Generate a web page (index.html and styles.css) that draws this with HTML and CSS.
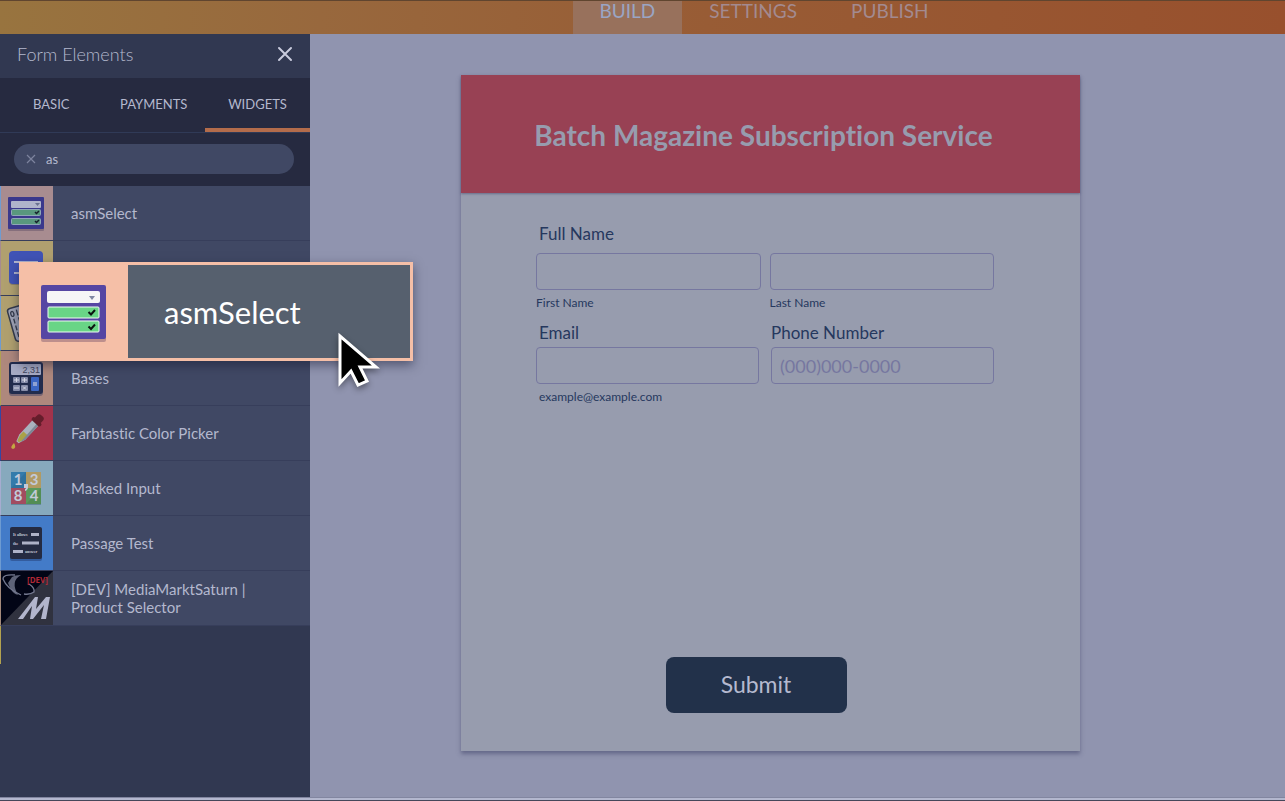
FILE: index.html
```html
<!DOCTYPE html>
<html lang="en">
<head>
  <meta charset="UTF-8" />
  <title>Form Builder</title>
  <link rel="stylesheet" href="styles.css">
</head>
<body>
  <nav class="topbar">
    <a href="#build" class="active">BUILD</a>
    <a href="#settings">SETTINGS</a>
    <a href="#publish">PUBLISH</a>
  </nav>

  <div class="workspace">
    <aside class="sidebar">
      <div class="sidebar-header">
        <h2>Form Elements</h2>
        <button class="close" aria-label="Close">
          <svg width="16" height="16" viewBox="0 0 16 16"><path d="M2 2l12 12M14 2L2 14" stroke="#c9cbdd" stroke-width="2" stroke-linecap="round"/></svg>
        </button>
      </div>

      <div class="tabs">
        <button>BASIC</button>
        <button>PAYMENTS</button>
        <button class="active">WIDGETS</button>
      </div>

      <div class="search">
        <label class="search-box">
          <svg width="10" height="10" viewBox="0 0 10 10"><path d="M1 1l8 8M9 1L1 9" stroke="#7d839e" stroke-width="1.2"/></svg>
          <input type="text" value="as" aria-label="Search widgets">
        </label>
      </div>

      <ul class="widgets">
        <li class="edge-sky">
          <span class="icon pink">
            <svg width="52" height="54" viewBox="0 0 52 54">
              <rect x="7" y="13" width="36" height="32" rx="1" fill="#866f7c"/>
              <rect x="7" y="11" width="36" height="32" rx="1" fill="#3a388c"/>
              <rect x="10" y="15" width="30" height="7" rx="1" fill="#b0b4cb"/>
              <path d="M34 17h5l-2.500 3z" fill="#697090"/>
              <rect x="10.500" y="23.500" width="29" height="6" rx="1" fill="#59987e" stroke="#8fa6b7"/>
              <rect x="10.500" y="32.500" width="29" height="6" rx="1" fill="#59987e" stroke="#8fa6b7"/>
              <path d="M34 26l1.500 1.500L38 25M34 35l1.500 1.500L38 34" fill="none" stroke="#15202c" stroke-width="1.500"/>
            </svg>
          </span>
          <span>asmSelect</span>
        </li>
        <li class="edge-pink">
          <span class="icon gold">
            <svg width="52" height="54" viewBox="0 0 52 54">
              <rect x="8" y="11" width="34" height="33" rx="4" fill="#8a8068"/>
              <rect x="8" y="10" width="34" height="33" rx="4" fill="#4053b5"/>
              <path d="M13 21h24M13 32h24" stroke="#b0b4cf" stroke-width="2"/>
            </svg>
          </span>
        </li>
        <li class="edge-sky">
          <span class="icon gold">
            <svg width="52" height="54" viewBox="0 0 52 54">
              <g transform="rotate(-16 20 30)">
                <rect x="11" y="10" width="22" height="34" rx="3" fill="#9fa3b5" stroke="#343a4b" stroke-width="1.500"/>
                <g fill="none" stroke="#343a4b" stroke-width="1.300"><ellipse cx="15" cy="16" rx="1.500" ry="2.500"/><path d="M20 13v6M15 21v5M20 21v5M15 28v5M20 28v5M15 35v5M20 35v5"/></g>
              </g>
            </svg>
          </span>
        </li>
        <li class="edge-gold">
          <span class="icon clay">
            <svg width="52" height="54" viewBox="0 0 52 54">
              <rect x="8" y="12" width="34" height="33" rx="3" fill="#776572"/>
              <rect x="8" y="11" width="34" height="32" rx="3" fill="#222c4d"/>
              <rect x="10" y="13" width="30" height="11" rx="1" fill="#a7abc4"/>
              <text x="39" y="22" class="calc-digits">2,31</text>
              <g fill="#858ba8"><rect x="12" y="26" width="7" height="6" rx="1"/><rect x="20" y="26" width="7" height="6" rx="1"/><rect x="12" y="34" width="7" height="6" rx="1"/><rect x="20" y="34" width="7" height="6" rx="1"/></g>
              <path d="M13 29h5M15.500 27v4M21 29h5M23.500 27v4M13 37h5M22 35.500l3 3M25 35.500l-3 3" stroke="#d3d5e2"/>
              <rect x="30" y="26" width="8" height="14" rx="1" fill="#3b66c3"/>
              <rect x="32" y="31" width="4" height="4" fill="#8fa2d2"/>
            </svg>
          </span>
          <span>Bases</span>
        </li>
        <li class="edge-blue">
          <span class="icon red">
            <svg width="52" height="54" viewBox="0 0 52 54">
              <g transform="rotate(43 26 26)">
                <path d="M22 13h8v20l-2.500 7h-3L22 33z" fill="#a9b1bd"/>
                <path d="M23 28h6v5l-2 6h-2l-2-6z" fill="#aaa247"/>
                <path d="M27.500 13h2.500v20l-2 5z" fill="#7d8795"/>
                <rect x="20" y="10" width="12" height="4" rx="2" fill="#651d2b"/>
                <rect x="22" y="4" width="8" height="8" rx="3" fill="#651d2b"/>
              </g>
              <path d="M13 37q-5 5-1 6 4-1 1-6z" fill="#c3a642"/>
            </svg>
          </span>
          <span>Farbtastic Color Picker</span>
        </li>
        <li class="edge-pale">
          <span class="icon teal">
            <svg width="52" height="54" viewBox="0 0 52 54">
              <rect x="10" y="12" width="30" height="32" fill="#65879c"/>
              <path d="M10 11h15v16H10z" fill="#347bab"/><path d="M25 11h15v16H25z" fill="#b09a64"/>
              <path d="M10 27h15v16H10z" fill="#a24c60"/><path d="M25 27h15v16H25z" fill="#5a995d"/>
              <path d="M10 27l15-16v16zM25 43l15-16v16z" fill="#000" opacity="0.080"/>
              <text x="17" y="24" class="tile-digit">1</text>
              <text x="33" y="24" class="tile-digit">3</text>
              <text x="17" y="40" class="tile-digit">8</text>
              <text x="33" y="40" class="tile-digit">4</text>
              <path d="M23 23h4v3q0 3-3 4v-2q1 0 1-1h-2z" fill="#c3cad9"/>
            </svg>
          </span>
          <span>Masked Input</span>
        </li>
        <li class="edge-sky">
          <span class="icon blue">
            <svg width="52" height="54" viewBox="0 0 52 54">
              <rect x="9" y="12" width="32" height="33" rx="2" fill="#335c9e"/>
              <rect x="9" y="11" width="32" height="32" rx="2" fill="#252b42"/>
              <text x="12" y="20" class="passage">It allows</text>
              <text x="12" y="29" class="passage">the</text>
              <text x="24" y="37" class="passage">answer</text>
              <path d="M30 18.500h8M21 27h17M12 35.500h10" stroke="#aeb2c8" stroke-width="3"/>
            </svg>
          </span>
          <span>Passage Test</span>
        </li>
        <li class="edge-sand">
          <span class="icon black">
            <svg width="52" height="54" viewBox="0 0 52 54">
              <path d="M52 0v54H0z" fill="#30323f"/>
              <path d="M20 4q-11 6-3 20Q11 23 7 12l4-6q3-2 9-2z" fill="#5e6378"/>
              <path d="M14 4Q2 3 2 8q4 10 18 16M28 13q6 4 5 8-4 3-10 2" fill="none" stroke="#747990" stroke-width="1.300"/>
              <text x="26" y="12" class="dev">[DEV]</text>
              <path d="M17 48l17-22h3l-2 12 10-12h4l-4 22h-5l3-14-11 14h-3l2-13-9 13z" fill="#b2b5cc"/>
            </svg>
          </span>
          <span>[DEV] MediaMarktSaturn | Product Selector</span>
        </li>
      </ul>

      <!-- widget being dragged onto the form -->
      <div class="dragged">
        <div class="dragged-icon">
          <svg width="66" height="58" viewBox="0 0 66 58">
            <rect x="0" y="3" width="65" height="54" rx="2" fill="#bd8f8c"/>
            <rect x="0" y="0" width="65" height="54" rx="2" fill="#5546a3"/>
            <rect x="6" y="6" width="53" height="12" rx="2" fill="#f5f5f7"/>
            <path d="M48 11h6l-3 4z" fill="#7e87a3"/>
            <rect x="7" y="22" width="51" height="11" rx="1" fill="#69d586" stroke="#eefaf2"/>
            <rect x="7" y="36" width="51" height="11" rx="1" fill="#69d586" stroke="#eefaf2"/>
            <path d="M47.500 27l2.500 2.500 4-4.500M47.500 41.500L50 44l4-4.500" fill="none" stroke="#0b1410" stroke-width="2"/>
          </svg>
        </div>
        <div class="dragged-label">asmSelect</div>
        <svg class="cursor" width="44" height="58" viewBox="0 0 44 58">
          <path d="M2 4v47l11-12 7 14 9-4-7-14h16z" fill="#000" stroke="#fff" stroke-width="3"/>
        </svg>
      </div>
    </aside>

    <main class="canvas">
      <form class="form-card">
        <h1>Batch Magazine Subscription Service</h1>
        <div class="form-body">
          <div class="group">
            <p class="label" id="full-name">Full Name</p>
            <div class="row name-row" role="group" aria-labelledby="full-name">
              <div class="field">
                <input type="text" id="first">
                <label class="hint" for="first">First Name</label>
              </div>
              <div class="field">
                <input type="text" id="last">
                <label class="hint" for="last">Last Name</label>
              </div>
            </div>
          </div>
          <div class="row contact-row">
            <div class="field email-field">
              <label class="label" for="email">Email</label>
              <input type="email" id="email" aria-describedby="email-hint">
              <span class="hint" id="email-hint">example@example.com</span>
            </div>
            <div class="field">
              <label class="label" for="phone">Phone Number</label>
              <input type="tel" id="phone" placeholder="(000)000-0000">
            </div>
          </div>
          <div class="actions">
            <button type="submit">Submit</button>
          </div>
        </div>
      </form>
    </main>
  </div>
</body>
</html>
```

FILE: styles.css
```css
* {
  box-sizing: border-box;
}

body {
  margin: 0;
  min-height: 100vh;
  display: flex;
  flex-direction: column;
  background: #b3b7ce;
  border-bottom: 1px solid #45475a;
  font-family: Lato, "Open Sans", sans-serif;
  font-variant-ligatures: none;
  color: #b4b8ce;
}

button,
input {
  font-family: inherit;
}

button {
  border: none;
  cursor: pointer;
}

/* Top navigation */
.topbar {
  display: flex;
  padding-left: calc(50% - 70px);
  border-top: 1px solid #60452f;
  background: linear-gradient(to right, #98743f, #98683d 25%, #985c35 55%, #98502d);
}

.topbar a {
  padding: 0 27px 13px;
  font-size: 19px;
  line-height: 20px;
  color: #a38a90;
  text-decoration: none;
}

.topbar a.active {
  background: #98715c;
  color: #9aa5c4;
}

.workspace {
  flex: 1;
  display: flex;
  margin-bottom: 2px;
  border-bottom: 1px solid #8286a0;
}

/* Sidebar */
.sidebar {
  position: relative;
  width: 310px;
  flex-shrink: 0;
  background: #313851;
}

.sidebar-header {
  display: flex;
  align-items: center;
  justify-content: space-between;
  height: 44px;
  padding: 0 17px 4px;
}

.sidebar-header h2 {
  margin: 0;
  font-size: 18px;
  font-weight: 300;
  line-height: 24px;
}

.close {
  padding: 0;
  background: none;
  line-height: 0;
}

.tabs {
  display: grid;
  grid-template-columns: 1fr 1fr 105px;
  background: #262a40;
  border-bottom: 1px solid #303a57;
}

.tabs button {
  height: 54px;
  padding: 2px 0 0;
  background: none;
  border-bottom: 4px solid transparent;
  font-size: 13px;
  color: #b4b8ce;
}

.tabs button.active {
  border-bottom-color: #b36c4b;
}

.search {
  padding: 11px 16px 12px 14px;
  background: #262a40;
}

.search-box {
  display: flex;
  align-items: center;
  gap: 10px;
  height: 30px;
  padding: 0 12px;
  border-radius: 15px;
  background: #404864;
}

.search-box input {
  flex: 1;
  min-width: 0;
  padding: 0;
  border: none;
  background: none;
  font-size: 13px;
  color: #b4b8ce;
}

.widgets {
  margin: 0;
  padding: 0;
  list-style: none;
}

.widgets li {
  display: flex;
  align-items: center;
  gap: 18px;
  height: 55px;
  padding-right: 48px;
  border-left: 1px solid;
  border-bottom: 1px solid #373e5b;
  background: #404864;
  font-size: 15px;
  line-height: 18px;
}

.widgets li > span {
  color: #b4b8ce;
}

.widgets::after {
  content: "";
  display: block;
  width: 1px;
  height: 38px;
  background: #b3a24f;
}

.widgets .edge-sky { border-left-color: #6e9bd1; }
.widgets .edge-pink { border-left-color: #a68b90; }
.widgets .edge-gold { border-left-color: #b0a052; }
.widgets .edge-blue { border-left-color: #3347a4; }
.widgets .edge-pale { border-left-color: #a6acd0; }
.widgets .edge-sand { border-left-color: #a48a7b; }

.icon {
  width: 52px;
  height: 54px;
  flex-shrink: 0;
}

.icon svg {
  display: block;
}

.icon.pink { background: #a88c90; }
.icon.gold { background: #b0a06f; }
.icon.clay { background: #ae887d; }
.icon.red { background: #a2334b; }
.icon.teal { background: #87a9bd; }
.icon.blue { background: #437bc8; }
.icon.black { background: #020516; }

.calc-digits {
  font: 9px "Liberation Sans", sans-serif;
  text-anchor: end;
  fill: #41465c;
}

.tile-digit {
  font: bold 15px Lato, sans-serif;
  text-anchor: middle;
  fill: #c3cad9;
}

.passage {
  font: bold 4px "Liberation Serif", serif;
  fill: #c5c8d8;
}

.dev {
  font: bold 8px "Open Sans", sans-serif;
  fill: #b02834;
}

/* Dragged widget */
.dragged {
  position: absolute;
  z-index: 1;
  top: 228px;
  left: 19px;
  display: flex;
  width: 394px;
  height: 99px;
  border: 3px solid #f5bfa7;
  background: #56606e;
  box-shadow: 0 4px 10px rgba(20, 24, 50, 0.5);
}

.dragged-icon {
  display: flex;
  align-items: center;
  width: 106px;
  padding: 4px 0 0 19px;
  background: #f5bfa7;
}

.dragged-label {
  padding-left: 36px;
  font-size: 31px;
  line-height: 94px;
  color: #fff;
}

.cursor {
  position: absolute;
  top: 67px;
  left: 316px;
  filter: drop-shadow(0 3px 3px rgba(0, 0, 0, 0.4));
}

/* Form preview */
.canvas {
  flex: 1;
  display: flex;
  padding: 41px 40px 46px 151px;
  background: #9094af;
}

.form-card {
  display: flex;
  flex-direction: column;
  flex: 1;
  max-width: 619px;
  background: #979cae;
  box-shadow: 0 3px 4px rgba(60, 62, 100, 0.5);
}

.form-card h1 {
  margin: 0;
  padding: 42px 14px 40px 0;
  background: #984154;
  box-shadow: 0 1px 2px rgba(60, 62, 100, 0.5);
  font-size: 28px;
  line-height: 36px;
  text-align: center;
  color: #979cae;
}

.form-body {
  flex: 1;
  display: flex;
  flex-direction: column;
  gap: 12px;
  padding: 31px 86px 38px 75px;
  color: #26385e;
}

.row {
  display: grid;
  grid-template-columns: 1fr 1fr;
}

.name-row {
  gap: 9px;
}

.contact-row {
  gap: 12px;
}

.field {
  display: flex;
  flex-direction: column;
  align-items: flex-start;
}

.label {
  margin: 0 0 4px;
  font-size: 17px;
  line-height: 20px;
}

.group .label {
  margin: 0 3px 9px;
}

.field input {
  width: 100%;
  height: 37px;
  padding: 0 8px;
  border: 1px solid #7677a0;
  border-radius: 4px;
  background: none;
  font-size: 18px;
}

.field input::placeholder {
  color: #7677a0;
}

.hint {
  margin-top: 5px;
  font-size: 12px;
  line-height: 16px;
}

.email-field .label,
.email-field .hint {
  margin-left: 3px;
}

.actions {
  display: flex;
  justify-content: center;
  margin-top: auto;
  padding-right: 18px;
}

.actions button {
  width: 181px;
  height: 56px;
  padding: 0 6px 2px;
  border-radius: 8px;
  background: #22314a;
  font-size: 23px;
  color: #b5b9cf;
}
```
